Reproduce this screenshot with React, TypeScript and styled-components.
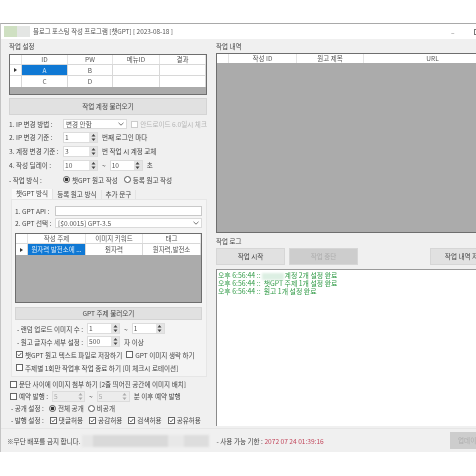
import styled, { createGlobalStyle } from 'styled-components'

const GlobalStyle = createGlobalStyle`
  html, body {
    margin: 0;
    padding: 0;
    background: #fff;
  }
  body {
    width: 476px;
    height: 476px;
    overflow: hidden;
    font-family: 'Noto Sans CJK KR', 'Noto Sans', sans-serif;
    font-size: 6.6px;
    color: #333;
  }
  * {
    box-sizing: border-box;
  }
`

const accountRows = [
  ['A', 'B', '', ''],
  ['C', 'D', '', ''],
]

type SpinProps = { value: string; width?: number; disabled?: boolean }
function Spin({ value, width = 35, disabled }: SpinProps) {
  return (
    <SpinBox $width={width} $disabled={disabled}>
      <SpinValue>{value}</SpinValue>
      <SpinArrows $disabled={disabled}>
        <svg width="5" height="9" viewBox="0 0 5 9">
          <path d="M2.5 1 L4.5 3.4 H.5Z M2.5 8 L4.5 5.6 H.5Z" fill="currentColor" />
        </svg>
      </SpinArrows>
    </SpinBox>
  )
}

function Check({ label, checked }: { label: string; checked?: boolean }) {
  return (
    <CheckLabel>
      <CheckBox>
        {checked && (
          <svg width="5" height="5" viewBox="0 0 7 7">
            <path d="M1 3.6 L2.8 5.4 L6 1.4" fill="none" stroke="#444" strokeWidth="1.2" />
          </svg>
        )}
      </CheckBox>
      {label}
    </CheckLabel>
  )
}

function Radio({ label, checked }: { label: string; checked?: boolean }) {
  return (
    <CheckLabel>
      <RadioDot $checked={checked} />
      {label}
    </CheckLabel>
  )
}

function Combo({ value, width }: { value: string; width: number }) {
  return (
    <ComboBox $width={width}>
      {value}
      <svg width="6" height="4" viewBox="0 0 6 4">
        <path d="M.5 .8 L3 3.2 L5.5 .8" fill="none" stroke="#666" strokeWidth=".9" />
      </svg>
    </ComboBox>
  )
}

export default function App() {
  return (
    <>
      <GlobalStyle />
      <Window>
        <TitleBar>
          <Logo />
          <Title>블로그 포스팅 작성 프로그램 [챗GPT] [ 2023-08-18 ]</Title>
          <WinControls>
            <span>–</span>
            <MaxIcon />
          </WinControls>
        </TitleBar>

        <Main>
          <LeftGroup>
            <GroupTitle>작업 설정</GroupTitle>
            <Grid $top={3}>
              <HeaderRow $columns="12px 46px 45px 47px 1fr">
                <Cell />
                <Cell>ID</Cell>
                <Cell>PW</Cell>
                <Cell>메뉴ID</Cell>
                <Cell>결과</Cell>
              </HeaderRow>
              {accountRows.map((row, i) => (
                <DataRow key={row[0]} $columns="12px 46px 45px 47px 1fr" $height={i === 0 ? 11 : 12}>
                  <Cell>{i === 0 && <RowMark />}</Cell>
                  {row.map((text, c) => (
                    <Cell key={c} $selected={i === 0 && c === 0}>
                      {text}
                    </Cell>
                  ))}
                </DataRow>
              ))}
              <GridEmpty $height={7} />
            </Grid>
            <WideButton $height={17} $top={3}>작업 계정 불러오기</WideButton>

            <Rows>
              <FormRow $top={3} $height={12} $gap={4}>
                <FormLabel $width={50}>1. IP 변경 방법 :</FormLabel>
                <Combo value="변경 안함" width={65} />
                <MutedCheck>
                  <CheckBox $muted />
                  안드로이드 6.0일시 체크
                </MutedCheck>
              </FormRow>
              <FormRow $height={14} $gap={4}>
                <FormLabel $width={50}>2. IP 변경 기준 :</FormLabel>
                <Spin value="1" />
                <span>번째 로그인 마다</span>
              </FormRow>
              <FormRow $height={14} $gap={4}>
                <FormLabel $width={50}>3. 계정 변경 기준 :</FormLabel>
                <Spin value="3" />
                <span>번 작업 시 계정 교체</span>
              </FormRow>
              <FormRow $height={14} $gap={4}>
                <FormLabel $width={50}>4. 작성 딜레이 :</FormLabel>
                <Spin value="10" />
                <span>~</span>
                <Spin value="10" width={33} />
                <span>초</span>
              </FormRow>
              <FormRow $height={15} $gap={6}>
                <FormLabel $width={48}>- 작업 방식 :</FormLabel>
                <Radio label="챗GPT 원고 작성" checked />
                <Radio label="등록 원고 작성" />
              </FormRow>
            </Rows>

            <TabStrip>
              <Tab $active>챗GPT 방식</Tab>
              <Tab>등록 원고 방식</Tab>
              <Tab>추가 문구</Tab>
            </TabStrip>
            <TabPanel>
              <PanelRow>
                <PanelLabel>1. GPT API :</PanelLabel>
                <TextInput />
              </PanelRow>
              <PanelRow>
                <PanelLabel>2. GPT 선택 :</PanelLabel>
                <Combo value="[$0.0015] GPT-3.5" width={147} />
              </PanelRow>

              <Grid $height={70} $top={4}>
                <HeaderRow $columns="12px 58px 57px 1fr">
                  <Cell />
                  <Cell>작성 주제</Cell>
                  <Cell>이미지 키워드</Cell>
                  <Cell>태그</Cell>
                </HeaderRow>
                <DataRow $columns="12px 58px 57px 1fr" $height={12}>
                  <Cell><RowMark /></Cell>
                  <Cell $selected>원자력 발전소에 ...</Cell>
                  <Cell>원자력</Cell>
                  <Cell>원자력,발전소</Cell>
                </DataRow>
                <GridEmpty />
              </Grid>
              <WideButton $height={13} $top={4}>GPT 주제 불러오기</WideButton>

              <FormRow $top={2} $height={13} $gap={4} $inset={2}>
                <FormLabel $width={66}>- 랜덤 업로드 이미지 수 :</FormLabel>
                <Spin value="1" width={33} />
                <span>~</span>
                <Spin value="1" width={33} />
              </FormRow>
              <FormRow $height={13} $gap={4} $inset={2}>
                <FormLabel $width={66}>- 원고 글자수 세부 설정 :</FormLabel>
                <Spin value="500" width={33} />
                <span>자 이상</span>
              </FormRow>
              <FormRow $height={13} $gap={4} $inset={1}>
                <Check label="챗GPT 원고 텍스트 파일로 저장하기" checked />
                <Check label="GPT 이미지 생략 하기" />
              </FormRow>
              <FormRow $height={13} $inset={1}>
                <Check label="주제별 1회만 작업후 작업 종료 하기 [미 체크시 로테이션]" />
              </FormRow>
            </TabPanel>

            <Rows>
              <FormRow $top={1} $height={12} $inset={1}>
                <Check label="문단 사이에 이미지 첨부 하기 [2줄 띄어진 공간에 이미지 배치]" />
              </FormRow>
              <FormRow $height={12} $gap={4} $inset={1}>
                <Check label="예약 발행 :" />
                <Spin value="5" width={33} disabled />
                <span>~</span>
                <Spin value="5" width={33} disabled />
                <span>분 이후 예약 발행</span>
              </FormRow>
              <FormRow $height={12} $gap={4} $inset={2}>
                <FormLabel $width={34}>- 공개 설정 :</FormLabel>
                <Radio label="전체 공개" checked />
                <Radio label="비공개" />
              </FormRow>
              <FormRow $height={12} $gap={6} $inset={2}>
                <FormLabel $width={32}>- 발행 설정 :</FormLabel>
                <Check label="댓글허용" checked />
                <Check label="공감허용" checked />
                <Check label="검색허용" checked />
                <Check label="공유허용" checked />
              </FormRow>
            </Rows>
          </LeftGroup>

          <RightColumn>
            <GroupTitle>작업 내역</GroupTitle>
            <Grid $height={180} $top={2} $openRight>
              <HeaderRow $columns="12px 68px 67px 138px 1fr">
                <Cell />
                <Cell>작성 ID</Cell>
                <Cell>원고 제목</Cell>
                <Cell>URL</Cell>
                <Cell />
              </HeaderRow>
              <GridEmpty />
            </Grid>

            <LogTitle>작업 로그</LogTitle>
            <ActionRow>
              <ActionButton>작업 시작</ActionButton>
              <ActionButton $disabled>작업 중단</ActionButton>
              <ActionButton $push>작업 내역 저장</ActionButton>
            </ActionRow>
            <LogBox>
              <LogLine>
                오후 6:56:44 ::<Redacted $width={22} />계정 2개 설정 완료
              </LogLine>
              <LogLine>오후 6:56:44 ::  챗GPT 주제 1개 설정 완료</LogLine>
              <LogLine>오후 6:56:44 ::  원고 1개 설정 완료</LogLine>
            </LogBox>
          </RightColumn>
        </Main>

        <Footer>
          <span>※무단 배포를 금지 합니다.</span>
          <Redacted
            $width={127}
            $height={12}
            $tone="linear-gradient(90deg, #e6e6e6 0 9%, #d9d9d9 9% 68%, #e8e8e8 68% 80%, #dddddd 80%)"
          />
          <Expiry>
            - 사용 가능 기한 : <b>2072 07 24 01:39:16</b>
          </Expiry>
          <FooterButton>업데이트</FooterButton>
        </Footer>
      </Window>
    </>
  )
}

const Window = styled.div`
  margin-top: 23px;
  width: 520px;
  height: 429px;
  background: #f0f0f0;
  border-top: 1px solid #a9a9a9;
  border-left: 1px solid #c4c4c4;
  filter: blur(0.35px);
`
const TitleBar = styled.div`
  height: 15px;
  background: #fff;
  display: flex;
  align-items: center;
  padding-left: 3px;
`
const Logo = styled.div`
  width: 26px;
  height: 11px;
  background: linear-gradient(90deg, #cfe0c2 0 50%, #e4e6e4 50%);
`
const Title = styled.div`
  margin-left: 3px;
  font-size: 6.4px;
  color: #555;
`
const WinControls = styled.div`
  width: 29px;
  margin-left: auto;
  margin-right: 40px;
  display: flex;
  align-items: center;
  justify-content: space-between;
  color: #777;
`
const MaxIcon = styled.i`
  width: 6px;
  height: 6px;
  border: 1px solid #777;
`
const Main = styled.div`
  display: flex;
  height: 389px;
`
const LeftGroup = styled.div`
  width: 208px;
  margin-left: 2px;
  padding: 3px 4px 0 6px;
`
const GroupTitle = styled.div`
  height: 9px;
  line-height: 9px;
  font-size: 6.5px;
  color: #444;
`
const Grid = styled.div<{ $height?: number; $top?: number; $openRight?: boolean }>`
  display: flex;
  flex-direction: column;
  height: ${p => (p.$height ? `${p.$height}px` : 'auto')};
  margin-top: ${p => p.$top ?? 1}px;
  border: 1px solid #6e6e6e;
  ${p => p.$openRight && 'border-right: 0;'}
  background: #ababab;
`
const HeaderRow = styled.div<{ $columns: string }>`
  display: grid;
  grid-template-columns: ${p => p.$columns};
  height: 9px;
  line-height: 9px;
  background: #fff;
  text-align: center;
  font-size: 6.5px;
  color: #555;
  & > div {
    border-right: 1px solid #e4e4e4;
  }
`
const DataRow = styled.div<{ $columns: string; $height: number }>`
  display: grid;
  grid-template-columns: ${p => p.$columns};
  height: ${p => p.$height}px;
  line-height: ${p => p.$height - 1}px;
  background: #fff;
  text-align: center;
  font-size: 6.5px;
  color: #555;
  & > div {
    border-right: 1px solid #d8d8d8;
    border-top: 1px solid #d8d8d8;
  }
`
const Cell = styled.div<{ $selected?: boolean }>`
  display: flex;
  align-items: center;
  justify-content: center;
  overflow: hidden;
  white-space: nowrap;
  ${p => p.$selected && 'background: #0f78d4; color: #dcecf9;'}
`
const RowMark = styled.i`
  border-left: 3px solid #333;
  border-top: 2px solid transparent;
  border-bottom: 2px solid transparent;
`
const GridEmpty = styled.div<{ $height?: number }>`
  flex: ${p => (p.$height ? `0 0 ${p.$height}px` : '1')};
  background: #ababab;
`
const WideButton = styled.div<{ $height: number; $top: number }>`
  height: ${p => p.$height}px;
  margin-top: ${p => p.$top}px;
  line-height: ${p => p.$height - 2}px;
  text-align: center;
  background: #e1e1e1;
  border: 1px solid #d4d4d4;
  color: #444;
`
const Rows = styled.div`
  display: flex;
  flex-direction: column;
`
const FormRow = styled.div<{ $top?: number; $height: number; $gap?: number; $inset?: number }>`
  display: flex;
  align-items: center;
  gap: ${p => p.$gap ?? 6}px;
  height: ${p => p.$height}px;
  margin-top: ${p => p.$top ?? 0}px;
  margin-left: ${p => p.$inset ?? 0}px;
  white-space: nowrap;
  color: #444;
`
const FormLabel = styled.span<{ $width: number }>`
  flex: 0 0 ${p => p.$width}px;
`
const ComboBox = styled.div<{ $width: number }>`
  display: flex;
  align-items: center;
  justify-content: space-between;
  width: ${p => p.$width}px;
  height: 10px;
  padding: 0 2px;
  background: #fff;
  border: 1px solid #dadada;
  color: #555;
`
const MutedCheck = styled.span`
  display: inline-flex;
  align-items: center;
  gap: 2px;
  color: #b4b4b4;
`
const SpinBox = styled.div<{ $width: number; $disabled?: boolean }>`
  display: flex;
  flex: none;
  justify-content: space-between;
  width: ${p => p.$width}px;
  height: 11px;
  padding-left: 1px;
  background: ${p => (p.$disabled ? '#ececec' : '#fff')};
  border: 1px solid #dcdcdc;
  color: ${p => (p.$disabled ? '#aaa' : '#555')};
`
const SpinValue = styled.span`
  line-height: 8px;
`
const SpinArrows = styled.span<{ $disabled?: boolean }>`
  width: 8px;
  display: flex;
  align-items: center;
  justify-content: center;
  background: ${p => (p.$disabled ? '#ececec' : '#e4e4e4')};
  color: ${p => (p.$disabled ? '#aaa' : '#444')};
`
const CheckLabel = styled.label`
  display: inline-flex;
  align-items: center;
  gap: 2px;
  white-space: nowrap;
`
const CheckBox = styled.i<{ $muted?: boolean }>`
  flex: none;
  display: inline-flex;
  align-items: center;
  justify-content: center;
  box-sizing: content-box;
  width: 5px;
  height: 5px;
  background: #fff;
  border: 1px solid ${p => (p.$muted ? '#ccc' : '#666')};
`
const RadioDot = styled.i<{ $checked?: boolean }>`
  flex: none;
  width: 7px;
  height: 7px;
  border-radius: 50%;
  border: 1px solid #555;
  background: ${p => (p.$checked ? 'radial-gradient(circle, #333 0 1.6px, #fff 2.1px)' : '#fff')};
`
const TabStrip = styled.div`
  display: flex;
  align-items: flex-end;
  height: 10px;
  margin: 2px 0 0 3px;
  color: #444;
`
const Tab = styled.div<{ $active?: boolean }>`
  padding: 0 4px;
  height: ${p => (p.$active ? 10 : 9)}px;
  line-height: 9px;
  background: ${p => (p.$active ? '#f8f8f8' : '#f0f0f0')};
  border-right: 1px solid #e4e4e4;
`
const TabPanel = styled.div`
  height: 178px;
  margin: 0 0 0 2px;
  padding: 5px 4px 0 3px;
  background: #f4f4f4;
  border: 1px solid #e6e6e6;
`
const PanelRow = styled.div`
  display: flex;
  align-items: center;
  height: 12px;
  color: #444;
  white-space: nowrap;
`
const PanelLabel = styled.span`
  flex: 0 0 40px;
`
const TextInput = styled.div`
  width: 147px;
  height: 10px;
  background: #fff;
  border: 1px solid #c9c9c9;
`
const RightColumn = styled.div`
  flex: 1;
  padding-top: 3px;
  padding-left: 5px;
`
const LogTitle = styled(GroupTitle)`
  margin-top: 4px;
`
const ActionRow = styled.div`
  display: flex;
  gap: 4px;
  margin-top: 2px;
`
const ActionButton = styled.div<{ $disabled?: boolean; $push?: boolean }>`
  width: 69px;
  height: 17px;
  line-height: 15px;
  text-align: center;
  background: ${p => (p.$disabled ? '#cdcdcd' : '#e1e1e1')};
  border: 1px solid #d6d6d6;
  color: ${p => (p.$disabled ? '#adadad' : '#444')};
  margin-left: ${p => (p.$push ? '68px' : 0)};
`
const LogBox = styled.div`
  height: 157px;
  margin-top: 4px;
  padding: 1px 0 0 1px;
  background: #fff;
  border-top: 1px solid #9a9a9a;
  border-left: 1px solid #8a8a8a;
`
const LogLine = styled.div`
  height: 8px;
  line-height: 8px;
  font-size: 6.9px;
  color: #2f9a45;
  white-space: pre;
`
const Redacted = styled.i<{ $width: number; $height?: number; $tone?: string }>`
  display: inline-block;
  width: ${p => p.$width}px;
  height: ${p => p.$height ?? 7}px;
  margin: 0 1px;
  background: ${p => p.$tone ?? '#dcefe3'};
  filter: blur(0.8px);
  vertical-align: middle;
`
const Footer = styled.div`
  display: flex;
  align-items: center;
  height: 24px;
  padding-left: 6px;
  color: #444;
  border-top: 1px solid #e6e6e6;
  white-space: nowrap;
`
const Expiry = styled.span`
  margin-left: 7px;
  b {
    font-weight: 400;
    color: #c2475c;
  }
`
const FooterButton = styled.div`
  margin-left: auto;
  width: 70px;
  height: 17px;
  line-height: 17px;
  padding-left: 8px;
  background: #cdcdcd;
  color: #adadad;
`
